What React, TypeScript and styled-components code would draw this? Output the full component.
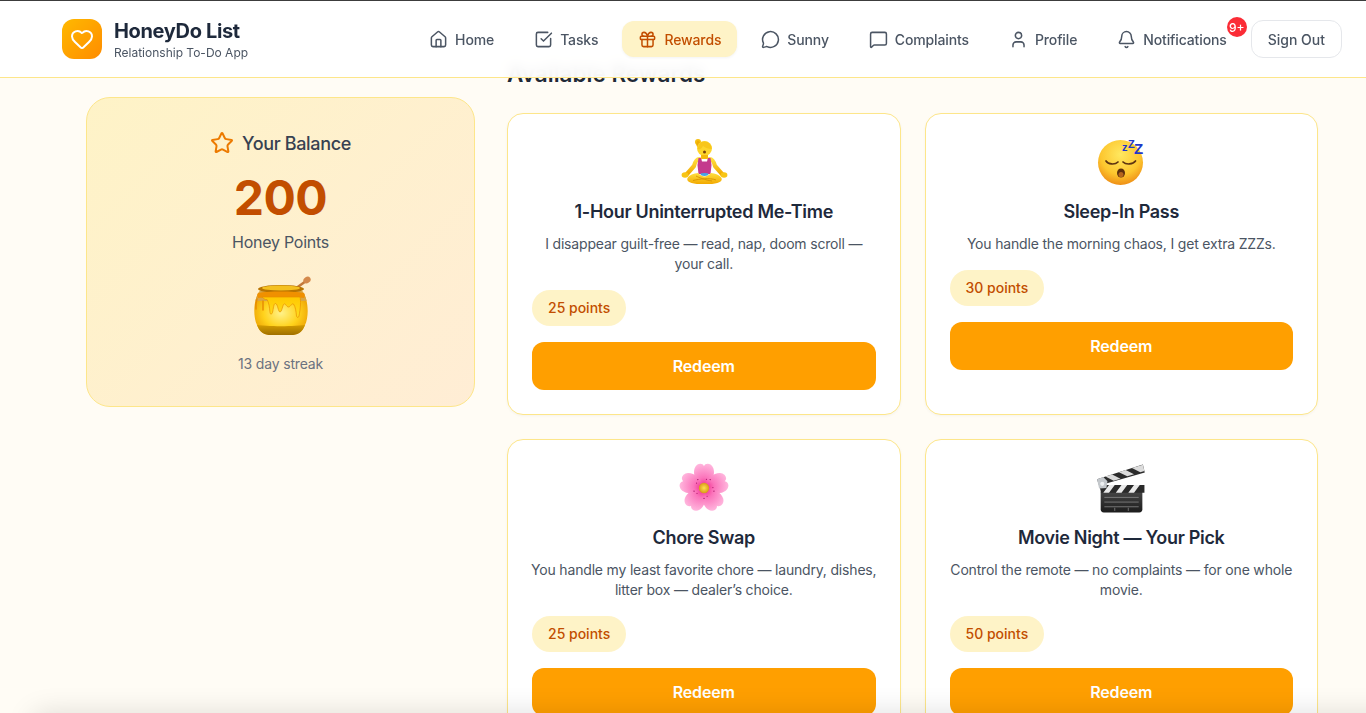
import React from "react";
import styled, { createGlobalStyle } from "styled-components";
import { House, SquareCheckBig, Gift, MessageCircle, MessageSquare, User, Bell, Star, Heart } from "lucide-react";

const Global = createGlobalStyle`
  * { box-sizing: border-box; }
  html, body { margin: 0; height: 100%; overflow: hidden; background: #fffcf5; }
  body { font-family: Inter, "Liberation Sans", sans-serif; color: #1f2937; -webkit-font-smoothing: antialiased; }
`;

const Page = styled.div`
  height: 713px;
  overflow: hidden;
  background: #fffcf5;
`;

const Header = styled.header`
  position: sticky;
  top: 0;
  z-index: 10;
  height: 78px;
  display: flex;
  align-items: center;
  justify-content: space-between;
  padding: 0 24px 0 62px;
  background: rgba(255, 255, 255, 0.93);
  backdrop-filter: blur(6px);
  border-top: 1px solid #3c3c3c;
  border-bottom: 1px solid #fde68a;
`;

const Brand = styled.div`
  display: flex;
  align-items: center;
  gap: 12px;
`;

const LogoMark = styled.div`
  width: 40px;
  height: 40px;
  border-radius: 12px;
  display: flex;
  align-items: center;
  justify-content: center;
  color: #fff;
  background: linear-gradient(135deg, #ffb900, #ff8c00);
`;

const BrandText = styled.div`
  display: flex;
  flex-direction: column;
`;

const BrandName = styled.div`
  font-size: 20px;
  line-height: 28px;
  font-weight: 700;
  letter-spacing: -0.35px;
  color: #1e293b;
`;

const BrandTag = styled.div`
  font-size: 12px;
  line-height: 16px;
  color: #4b5563;
`;

const Nav = styled.nav`
  display: flex;
  align-items: center;
  gap: 8px;
`;

const NavItem = styled.a<{ $active?: boolean }>`
  position: relative;
  height: 36px;
  display: flex;
  align-items: center;
  gap: 7px;
  padding: 0 16px;
  border-radius: 12px;
  font-size: 14px;
  font-weight: 500;
  letter-spacing: -0.13px;
  color: ${(p) => (p.$active ? "#c24e00" : "#4b5563")};
  background: ${(p) => (p.$active ? "#fef3c7" : "transparent")};
  box-shadow: ${(p) => (p.$active ? "0 1px 3px rgba(0,0,0,.05)" : "none")};
`;

const Badge = styled.span`
  position: absolute;
  top: -4px;
  right: -4px;
  width: 20px;
  height: 20px;
  border-radius: 50%;
  display: flex;
  align-items: center;
  justify-content: center;
  background: #fb2c36;
  color: #fff;
  font-size: 12px;
  font-weight: 500;
  letter-spacing: 0;
`;

const SignOut = styled.button`
  height: 38px;
  padding: 0 16px;
  border: 1px solid #e5e7eb;
  border-radius: 12px;
  background: #fff;
  font: 500 14px Inter, "Liberation Sans", sans-serif;
  color: #4b5563;
`;

const Main = styled.main`
  margin-top: -20px;
  padding: 0 48px 0 86px;
  display: grid;
  grid-template-columns: 389px 1fr;
  gap: 32px;
  align-items: start;
`;

const BalanceCard = styled.section`
  margin-top: 39px;
  height: 310px;
  padding: 32px 24px;
  border: 1px solid #fde68a;
  border-radius: 24px;
  background: linear-gradient(135deg, #fef3c7, #ffedd5);
  display: flex;
  flex-direction: column;
  align-items: center;
  text-align: center;
`;

const BalanceTitle = styled.div`
  display: flex;
  align-items: center;
  gap: 8px;
  height: 26px;
  margin-bottom: 18px;
  font-size: 18px;
  font-weight: 500;
  letter-spacing: -0.35px;
  color: #374151;
  svg { color: #ec7a00; }
`;

const BalanceValue = styled.div`
  font-size: 48px;
  line-height: 48px;
  font-weight: 700;
  letter-spacing: -0.5px;
  color: #c24e00;
  margin-bottom: 8px;
`;

const BalanceLabel = styled.div`
  font-size: 16px;
  line-height: 24px;
  letter-spacing: -0.25px;
  color: #4b5563;
  margin-bottom: 16px;
`;

const PotBox = styled.div`
  height: 72px;
  margin-bottom: 12px;
  display: flex;
  align-items: center;
`;

const Streak = styled.div`
  font-size: 14px;
  line-height: 20px;
  letter-spacing: -0.15px;
  color: #6b7280;
`;

const Heading = styled.h2`
  margin: 0 0 23px;
  font-size: 22.5px;
  line-height: 32px;
  font-weight: 600;
  color: #1f2937;
`;

const Grid = styled.div`
  display: grid;
  grid-template-columns: 1fr 1fr;
  gap: 24px;
`;

const Card = styled.article`
  padding: 24px;
  border: 1px solid #fde68a;
  border-radius: 16px;
  background: #fff;
  box-shadow: 0 1px 3px rgba(0, 0, 0, 0.04);
`;

const EmojiBox = styled.div`
  height: 48px;
  margin-bottom: 12px;
  display: flex;
  align-items: center;
  justify-content: center;
`;

const CardTitle = styled.h3`
  margin: 0 0 8px;
  font-size: 18px;
  line-height: 28px;
  font-weight: 600;
  letter-spacing: -0.3px;
  text-align: center;
  color: #1e293b;
`;

const CardText = styled.p`
  margin: 0 -1px 16px;
  font-size: 14px;
  line-height: 20px;
  letter-spacing: -0.18px;
  text-align: center;
  color: #4b5563;
`;

const Points = styled.div`
  display: inline-flex;
  align-items: center;
  height: 36px;
  padding: 0 16px 1px;
  margin-bottom: 16px;
  border-radius: 999px;
  background: #fef3c7;
  color: #c24e00;
  font-size: 14px;
  font-weight: 500;
`;

const Redeem = styled.button`
  display: block;
  width: 100%;
  height: 48px;
  border: 0;
  border-radius: 12px;
  background: #ff9f00;
  color: #fff;
  font: 600 16px Inter, "Liberation Sans", sans-serif;
  letter-spacing: -0.15px;
`;

const WindowEdge = styled.div`
  position: fixed;
  left: 32px;
  right: -60px;
  bottom: -30px;
  height: 30px;
  border-radius: 12px;
  box-shadow: 0 0 28px rgba(0, 0, 0, 0.13);
  z-index: 20;
`;

const Meditate = () => (
  <svg width="48" height="48" viewBox="0 0 48 48">
    <defs>
      <linearGradient id="mskin" x1="0" y1="0" x2="0" y2="1">
        <stop offset="0" stopColor="#ffdf40" />
        <stop offset="1" stopColor="#f2a900" />
      </linearGradient>
    </defs>
    <circle cx="18" cy="4" r="3" fill="#f6bf10" />
    <path d="M18 2.500l3 3-3 4c-2-1-2.500-5 0-7z" fill="#eeae06" />
    <ellipse cx="24.500" cy="10.500" rx="7.500" ry="7.500" fill="#fdd52c" />
    <path d="M18 11c2 1 4-1 5-3 2 2 6 3 8.500 3 .5-4-3-7.500-7-7.500S18 7 18 11z" fill="#f8c61a" />
    <ellipse cx="24.500" cy="14" rx="1.500" ry="1.600" fill="#7a4308" />
    <path d="M21 17h7v3l3 1H18l3-1z" fill="#f4b80c" />
    <path d="M19.500 21 C16 21 15 24 14 28 L7 36" fill="none" stroke="url(#mskin)" strokeWidth="4.200" strokeLinecap="round" strokeLinejoin="round" />
    <path d="M29.500 21 C33 21 34 24 35 28 L42 36" fill="none" stroke="url(#mskin)" strokeWidth="4.200" strokeLinecap="round" strokeLinejoin="round" />
    <path d="M18.500 20h2.500l1 3.500h5l1-3.500h2.500l1 7-1 9H18.500l-1-9z" fill="#c43a8d" />
    <ellipse cx="5" cy="37" rx="3.400" ry="2.800" fill="#f8c514" />
    <ellipse cx="44" cy="37" rx="3.400" ry="2.800" fill="#f8c514" />
    <ellipse cx="24.500" cy="36.500" rx="4" ry="1.400" fill="#45a5e6" />
    <path d="M18 35c-4 .5-9 2-10.500 5C6 43.500 11 46 20 46h9c9 0 14-2.500 12.500-6-1.500-3-6.500-4.500-10.500-5-2 2-4.500 3.500-6.500 3.500S20 37 18 35z" fill="url(#mskin)" />
    <path d="M13 42.500c6-1.500 17-3 23-.5M16 38c3 1.500 9 4 16 5" fill="none" stroke="#d18c00" strokeWidth=".8" />
  </svg>
);

const Sleeping = () => (
  <svg width="48" height="48" viewBox="0 0 48 48" overflow="visible">
    <defs>
      <radialGradient id="sface" cx=".5" cy=".32" r=".72">
        <stop offset="0" stopColor="#ffe860" />
        <stop offset=".62" stopColor="#fdc62e" />
        <stop offset="1" stopColor="#ec8612" />
      </radialGradient>
    </defs>
    <circle cx="23.500" cy="24.500" r="22.500" fill="url(#sface)" />
    <path d="M9 23c2 3.500 9 4 12 1M26 24c3 3 10 2.500 12.500-1" fill="none" stroke="#5e3410" strokeWidth="1.700" strokeLinecap="round" />
    <ellipse cx="24" cy="35" rx="4" ry="4.500" fill="#5c2f0c" />
    <ellipse cx="24" cy="36.500" rx="2.500" ry="2.600" fill="#b5651d" />
    <g fill="#1f38c8" fontFamily="'Liberation Sans', sans-serif" fontWeight="700">
      <text x="25" y="13" fontSize="11">z</text>
      <text x="31" y="10" fontSize="11">Z</text>
      <text x="37" y="16" fontSize="15">Z</text>
    </g>
  </svg>
);

const Blossom = () => (
  <svg width="50" height="50" viewBox="0 0 48 48">
    <defs>
      <radialGradient id="bpetal" cx=".5" cy=".95" r=".95">
        <stop offset="0" stopColor="#f0288c" />
        <stop offset=".4" stopColor="#fb74bb" />
        <stop offset="1" stopColor="#ffb4dc" />
      </radialGradient>
      <radialGradient id="bcore" cx=".5" cy=".5" r=".5">
        <stop offset="0" stopColor="#ffe14d" />
        <stop offset="1" stopColor="#d99a1a" />
      </radialGradient>
    </defs>
    {[0, 72, 144, 216, 288].map((a) => (
      <path
        key={a}
        transform={`rotate(${a} 24 24)`}
        d="M24 24 C16 19 13 11 15 5 C17 0 22.500 -.5 24 3 C25.500 -.5 31 0 33 5 C35 11 32 19 24 24z"
        fill="url(#bpetal)"
      />
    ))}
    {[0, 72, 144, 216, 288].map((a) => (
      <g key={a} transform={`rotate(${a + 36} 24 24)`} fill="#a11060">
        <circle cx="24" cy="14" r=".6" />
        <circle cx="21" cy="16" r=".5" />
      </g>
    ))}
    <circle cx="24" cy="24" r="5" fill="url(#bcore)" />
  </svg>
);

const Clapper = () => (
  <svg width="50" height="50" viewBox="0 0 48 48">
    <defs>
      <linearGradient id="cbody" x1="0" y1="0" x2="0" y2="1">
        <stop offset="0" stopColor="#4a4a4a" />
        <stop offset="1" stopColor="#1c1c1c" />
      </linearGradient>
    </defs>
    <rect x="4.500" y="25" width="40" height="22.500" rx="3" fill="url(#cbody)" />
    <path d="M8 33h33M8 37.500h33M8 42h33M18 43v3M31 43v3" stroke="#a0a0a0" strokeWidth=".6" />
    <path d="M3 21h43.500v7.500H5z" fill="#2a2a2a" />
    <path d="M7 28.500l5.500-7.500h5.500l-5.500 7.500zM19 28.500l5.500-7.500h5.500l-5.500 7.500zM31 28.500l5.500-7.500h5.500l-5.500 7.500z" fill="#eaeaea" />
    <path d="M1 15.500 45 1.500l1.800 7.500L3 21.500z" fill="#2c2c2c" />
    <path d="M9 13l8 4 6.500-2-8-4zM22 8.800l8 4 6.500-2-8-4zM34.500 4.800l8 4 4-1.200-1.500-6z" fill="#dcdcdc" />
    <path d="M1 15.500l6-2 4 4-1 6.500-7 .5z" fill="#c4c8cc" />
    <circle cx="6" cy="20" r="2" fill="#eef0f2" />
  </svg>
);

const Pot = () => (
  <svg width="60" height="62" viewBox="0 0 60 62">
    <defs>
      <radialGradient id="pbody" cx=".5" cy=".5" r=".6">
        <stop offset="0" stopColor="#fff28a" />
        <stop offset=".55" stopColor="#ffd21c" />
        <stop offset="1" stopColor="#ea9a00" />
      </radialGradient>
      <linearGradient id="pbase" x1="0" y1="0" x2="0" y2="1">
        <stop offset="0" stopColor="#d9a000" />
        <stop offset="1" stopColor="#8f6200" />
      </linearGradient>
      <linearGradient id="pdrip" x1="0" y1="0" x2="0" y2="1">
        <stop offset="0" stopColor="#ffc800" />
        <stop offset="1" stopColor="#ffdd20" />
      </linearGradient>
      <clipPath id="pclip">
        <path d="M9 16C2 24 2 42 6 50c3 8 8 10 14 10h20c6 0 11-2 14-10 4-8 4-26-3-34z" />
      </clipPath>
    </defs>
    <path d="M44 14 55 6" stroke="#c47a3c" strokeWidth="2.600" strokeLinecap="round" />
    <ellipse cx="56" cy="5" rx="3.800" ry="3.200" transform="rotate(-35 56 5)" fill="#d4894c" />
    <path d="M9 16C2 24 2 42 6 50c3 8 8 10 14 10h20c6 0 11-2 14-10 4-8 4-26-3-34z" fill="url(#pbody)" />
    <g clipPath="url(#pclip)">
      <path d="M0 49c14 3 46 3 60 0v14H0z" fill="url(#pbase)" />
      <rect x="0" y="14" width="60" height="12" fill="#d9a544" />
    </g>
    <ellipse cx="30" cy="14" rx="23" ry="4" fill="#b87400" />
    <ellipse cx="30" cy="13" rx="19" ry="2.500" fill="#f4c020" />
    <path d="M7 18c10-2 36-2 46 0 1 1 1 4 0 5-10-1-36-1-46 0-1-1-1-4 0-5z" fill="#f09000" />
    <path d="M11 22h38c1 3 .5 12-1 19-.5 2-2 2-2.500 0-.5-5-1-9-3-12-2-1-3 3-5 3s-3-4-4.500-3-2 8-4 8-2-8-4.500-8.500c-2 0-2 5-3 9-.5 2-2.500 2-2.500 0-.5-5-1-10-3-13-1.500 1-3.500-1.500-5-2.500z" fill="url(#pdrip)" stroke="#e88f00" strokeWidth=".7" />
    <path d="M6 24c-1 3-1.500 7-1 10M12 26c0 2 0 6 0 9" stroke="#e78a00" strokeWidth="1.400" fill="none" strokeLinecap="round" />
  </svg>
);

const links = [
  { label: "Home", icon: House },
  { label: "Tasks", icon: SquareCheckBig },
  { label: "Rewards", icon: Gift, active: true },
  { label: "Sunny", icon: MessageCircle },
  { label: "Complaints", icon: MessageSquare },
  { label: "Profile", icon: User },
  { label: "Notifications", icon: Bell, badge: "9+" },
];

const rewards = [
  { emoji: <Meditate />, title: "1-Hour Uninterrupted Me-Time", text: "I disappear guilt-free — read, nap, doom scroll — your call.", points: 25 },
  { emoji: <Sleeping />, title: "Sleep-In Pass", text: "You handle the morning chaos, I get extra ZZZs.", points: 30 },
  { emoji: <Blossom />, title: "Chore Swap", text: "You handle my least favorite chore — laundry, dishes, litter box — dealer’s choice.", points: 25 },
  { emoji: <Clapper />, title: "Movie Night — Your Pick", text: "Control the remote — no complaints — for one whole movie.", points: 50 },
];

export default function App() {
  return (
    <Page>
      <Global />
      <Header>
        <Brand>
          <LogoMark>
            <Heart size={24} strokeWidth={2} />
          </LogoMark>
          <BrandText>
            <BrandName>HoneyDo List</BrandName>
            <BrandTag>Relationship To-Do App</BrandTag>
          </BrandText>
        </Brand>
        <Nav>
          {links.map(({ label, icon: Icon, active, badge }) => (
            <NavItem key={label} $active={active}>
              <Icon size={19} strokeWidth={1.9} />
              {label}
              {badge && <Badge>{badge}</Badge>}
            </NavItem>
          ))}
          <SignOut>Sign Out</SignOut>
        </Nav>
      </Header>
      <Main>
        <BalanceCard>
          <BalanceTitle>
            <Star size={24} strokeWidth={2} />
            Your Balance
          </BalanceTitle>
          <BalanceValue>200</BalanceValue>
          <BalanceLabel>Honey Points</BalanceLabel>
          <PotBox>
            <Pot />
          </PotBox>
          <Streak>13 day streak</Streak>
        </BalanceCard>
        <section>
          <Heading>Available Rewards</Heading>
          <Grid>
            {rewards.map((r) => (
              <Card key={r.title}>
                <EmojiBox>{r.emoji}</EmojiBox>
                <CardTitle>{r.title}</CardTitle>
                <CardText>{r.text}</CardText>
                <Points>{r.points} points</Points>
                <Redeem>Redeem</Redeem>
              </Card>
            ))}
          </Grid>
        </section>
      </Main>
      <WindowEdge />
    </Page>
  );
}
